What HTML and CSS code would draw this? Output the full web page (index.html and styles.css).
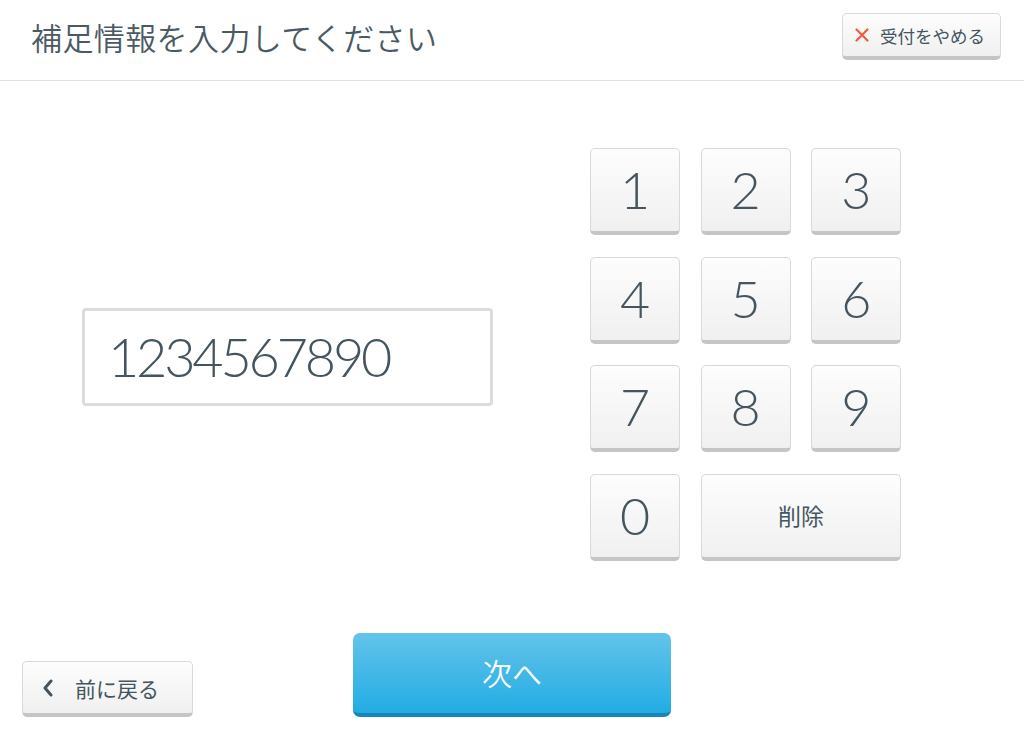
FILE: index.html
```html
<!DOCTYPE html>
<html lang="ja">
<head>
<meta charset="utf-8">
<title>補足情報を入力してください</title>
<link rel="stylesheet" href="styles.css">
</head>
<body>
<div class="page">
  <header class="header">
    <h1 class="title">補足情報を入力してください</h1>
    <button class="btn cancel">
      <svg class="cancel-icon" viewBox="0 0 14 14" width="14" height="14"><path d="M1.5 1.5 L12.5 12.5 M12.5 1.5 L1.5 12.5" stroke="#ef5d3b" stroke-width="2.2" stroke-linecap="round" fill="none"/></svg>
      <span>受付をやめる</span>
    </button>
  </header>
  <main class="main">
    <div class="display">1234567890</div>
    <div class="keypad">
      <button class="btn key">1</button>
      <button class="btn key">2</button>
      <button class="btn key">3</button>
      <button class="btn key">4</button>
      <button class="btn key">5</button>
      <button class="btn key">6</button>
      <button class="btn key">7</button>
      <button class="btn key">8</button>
      <button class="btn key">9</button>
      <button class="btn key">0</button>
      <button class="btn key key-del">削除</button>
    </div>
  </main>
  <footer class="footer">
    <button class="btn back">
      <svg class="back-icon" viewBox="0 0 12 18" width="12" height="18"><path d="M9 2 L3 9 L9 16" stroke="#44555f" stroke-width="3" stroke-linecap="round" stroke-linejoin="round" fill="none"/></svg>
      <span>前に戻る</span>
    </button>
    <button class="next">次へ</button>
    <div></div>
  </footer>
</div>
</body>
</html>
```

FILE: styles.css
```css
* { box-sizing: border-box; }
html, body { margin: 0; padding: 0; background: #ffffff; }
body {
  font-family: "Noto Sans CJK JP", "Noto Sans", sans-serif;
  color: #44555f;
}
.page { width: 1024px; height: 751px; overflow: hidden; }

.header {
  height: 81px;
  border-bottom: 1px solid #e2e2e2;
  display: flex;
  align-items: center;
  justify-content: space-between;
  padding: 0 23px 7px 31px;
}
.title {
  margin: 0;
  font-size: 31px;
  font-weight: 350;
  letter-spacing: 0.4px;
  color: #4a5a63;
}

.btn {
  font-family: inherit;
  color: #44555f;
  background: linear-gradient(#fdfdfd, #f0f0f0);
  border: 1px solid #d9d9d9;
  border-bottom: 4px solid #c5c5c5;
  border-radius: 5px;
  padding: 0;
  cursor: pointer;
}

.cancel {
  width: 159px;
  height: 47px;
  display: flex;
  align-items: center;
  padding-left: 12px;
  gap: 11px;
  font-size: 17.5px;
}
.cancel-icon { display: block; }

.main {
  display: flex;
  align-items: center;
  gap: 97px;
  padding: 67px 0 0 82px;
}
.display {
  width: 411px;
  height: 98px;
  margin-top: 4px;
  border: 3px solid #dcdcdc;
  border-radius: 4px;
  padding-left: 23px;
  display: flex;
  align-items: center;
  font-family: Lato, "Open Sans", sans-serif;
  font-weight: 300;
  font-size: 54px;
  letter-spacing: -3.2px;
  color: #44555f;
}
.keypad {
  display: grid;
  grid-template-columns: repeat(3, 90px);
  grid-auto-rows: 87px;
  column-gap: 20.7px;
  row-gap: 21.7px;
}
.key {
  font-family: Lato, "Open Sans", sans-serif;
  font-weight: 300;
  font-size: 52px;
  line-height: 1;
  display: flex;
  align-items: center;
  justify-content: center;
  padding-bottom: 2px;
}
.key-del {
  grid-column: span 2;
  font-family: "Noto Sans CJK JP", sans-serif;
  font-weight: 400;
  font-size: 23px;
}

.footer {
  display: grid;
  grid-template-columns: 1fr auto 1fr;
  align-items: end;
  padding: 0 22px;
  margin-top: 72px;
}
.back {
  width: 171px;
  height: 56px;
  display: flex;
  align-items: center;
  padding-left: 19px;
  gap: 21px;
  font-size: 21px;
}
.back-icon { display: block; }
.next {
  width: 318px;
  height: 84px;
  border: none;
  border-bottom: 4px solid #1787b8;
  border-radius: 7px;
  background: linear-gradient(#63c4ea, #22ace3);
  color: #ffffff;
  font-family: "Noto Sans CJK JP", sans-serif;
  font-size: 30px;
  font-weight: 350;
  padding: 0 0 2px 0;
  cursor: pointer;
}
```
